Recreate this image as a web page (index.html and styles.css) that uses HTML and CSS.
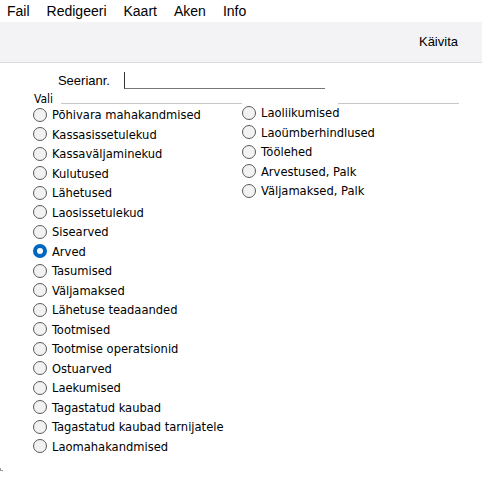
FILE: index.html
```html
<!DOCTYPE html>
<html lang="et">
<head>
<meta charset="utf-8">
<title>Seerianr.</title>
<link rel="stylesheet" href="styles.css">
</head>
<body>
<div class="window">
  <nav class="menubar">
    <span class="menu-item">Fail</span>
    <span class="menu-item">Redigeeri</span>
    <span class="menu-item">Kaart</span>
    <span class="menu-item">Aken</span>
    <span class="menu-item">Info</span>
  </nav>
  <div class="toolbar">
    <span class="tool-button">Käivita</span>
  </div>
  <div class="form">
    <div class="field-row">
      <label class="field-label">Seerianr.</label>
      <span class="field-input"></span>
    </div>
    <div class="group">
      <div class="group-title">
        <span class="group-name">Vali</span>
        <span class="group-line line-a"></span>
        <span class="group-gap"></span>
        <span class="group-line line-b"></span>
      </div>
      <div class="columns">
        <ul class="col col-1">
          <li class="opt"><span class="radio"></span>Põhivara mahakandmised</li>
          <li class="opt"><span class="radio"></span>Kassasissetulekud</li>
          <li class="opt"><span class="radio"></span>Kassaväljaminekud</li>
          <li class="opt"><span class="radio"></span>Kulutused</li>
          <li class="opt"><span class="radio"></span>Lähetused</li>
          <li class="opt"><span class="radio"></span>Laosissetulekud</li>
          <li class="opt"><span class="radio"></span>Sisearved</li>
          <li class="opt"><span class="radio checked"></span>Arved</li>
          <li class="opt"><span class="radio"></span>Tasumised</li>
          <li class="opt"><span class="radio"></span>Väljamaksed</li>
          <li class="opt"><span class="radio"></span>Lähetuse teadaanded</li>
          <li class="opt"><span class="radio"></span>Tootmised</li>
          <li class="opt"><span class="radio"></span>Tootmise operatsionid</li>
          <li class="opt"><span class="radio"></span>Ostuarved</li>
          <li class="opt"><span class="radio"></span>Laekumised</li>
          <li class="opt"><span class="radio"></span>Tagastatud kaubad</li>
          <li class="opt"><span class="radio"></span>Tagastatud kaubad tarnijatele</li>
          <li class="opt"><span class="radio"></span>Laomahakandmised</li>
        </ul>
        <ul class="col col-2">
          <li class="opt"><span class="radio"></span>Laoliikumised</li>
          <li class="opt"><span class="radio"></span>Laoümberhindlused</li>
          <li class="opt"><span class="radio"></span>Töölehed</li>
          <li class="opt"><span class="radio"></span>Arvestused, Palk</li>
          <li class="opt"><span class="radio"></span>Väljamaksed, Palk</li>
        </ul>
      </div>
    </div>
  </div>
  <span class="grip"></span>
</div>
</body>
</html>
```
FILE: styles.css
```css
* { box-sizing: border-box; }
html, body { margin: 0; padding: 0; background: #ffffff; }
body {
  font-family: "Liberation Sans", Arial, sans-serif;
  color: #000;
  width: 482px;
  height: 477px;
  overflow: hidden;
}
.window { position: relative; height: 477px; }

.menubar {
  display: flex;
  height: 22px;
  align-items: center;
  padding-left: 7px;
  gap: 17px;
  font-size: 14px;
  background: #fff;
}
.menu-item { line-height: 22px; }

.toolbar {
  height: 41px;
  background: #f3f3f5;
  border-bottom: 1px solid #dcdcdc;
  display: flex;
  justify-content: flex-end;
  align-items: center;
  padding-right: 24px;
  font-size: 13px;
}
.tool-button { padding-bottom: 1px; }

.form { padding: 9px 0 0 33px; }

.field-row {
  display: flex;
  align-items: center;
  height: 17px;
}
.field-label {
  width: 91px;
  text-align: right;
  font-size: 13px;
  padding-right: 14px;
}
.field-input {
  width: 201px;
  height: 17px;
  border-left: 1px solid #333;
  border-bottom: 1px solid #777;
}

.group { margin-top: 5px; }
.group-title {
  display: flex;
  align-items: flex-end;
  height: 11px;
  font-family: "DejaVu Sans Condensed", "DejaVu Sans", sans-serif;
  font-size: 12px;
}
.group-name { line-height: 11px; margin-left: 1px; width: 27px; flex: none; }
.group-line {
  height: 1px;
  background: #c8c8c8;
  margin-bottom: 1px;
  flex: none;
}
.line-a { width: 181px; }
.group-gap { width: 96px; flex: none; }
.line-b { width: 121px; }

.columns { display: flex; }
.col { list-style: none; margin: 0; padding: 0; }
.col-1 { width: 209px; }
.col-2 { margin-top: -2px; }
.opt {
  display: flex;
  align-items: center;
  height: 19.5px;
  font-family: "DejaVu Sans Condensed", "DejaVu Sans", sans-serif;
  font-size: 12.8px;
  white-space: nowrap;
}
.radio {
  width: 14px;
  height: 14px;
  border-radius: 50%;
  border: 1px solid #5a5a5a;
  background: #f2f2f2;
  margin-right: 5px;
  flex: none;
}
.radio.checked {
  border: 4px solid #0067c0;
  background: #fff;
}

.grip {
  position: absolute;
  left: 0;
  bottom: 6px;
  width: 3px;
  height: 3px;
  border-left: 1px solid #999;
  border-bottom: 1px solid #999;
}
```
